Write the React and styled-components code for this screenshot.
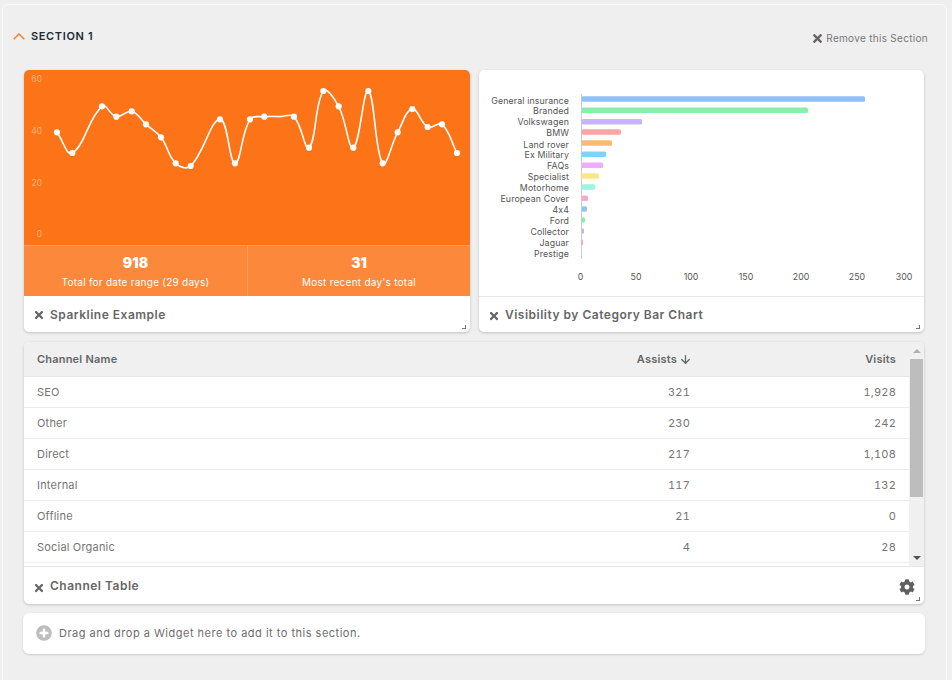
import React from "react";
import styled, { createGlobalStyle } from "styled-components";
import { ArrowDown } from "lucide-react";
import { FaTimes, FaCog, FaPlusCircle } from "react-icons/fa";

const GlobalStyle = createGlobalStyle`
	html, body {
		margin: 0;
		padding: 0;
		height: 100%;
		overflow: hidden;
		background: #efefef;
		font-family: Inter, "Open Sans", "Liberation Sans", sans-serif;
		font-feature-settings: "calt" 0;
		color: #666;
	}
	* {
		box-sizing: border-box;
	}
`;

const Page = styled.div`
	width: 952px;
	height: 680px;
	padding: 4px 5px 0 2px;
`;

const Panel = styled.section`
	height: 690px;
	border: 1px solid #fafafa;
	border-radius: 6px;
	padding: 0 22px 0 21px;
`;

const SectionHead = styled.header`
	height: 65px;
	margin: 0 -4px 0 -11px;
	padding-top: 19px;
	display: flex;
	align-items: flex-start;
	justify-content: space-between;
`;

const SectionTitle = styled.h2`
	margin: 0;
	display: flex;
	align-items: center;
	gap: 6px;
	font-size: 11px;
	font-weight: 600;
	line-height: 24px;
	color: #222b33;
	letter-spacing: 0.65px;
`;

const RemoveLink = styled.a`
	display: flex;
	align-items: center;
	gap: 2px;
	margin-top: 4px;
	font-size: 10px;
	line-height: 20px;
	color: #777;
	letter-spacing: 0.3px;
`;

const Row = styled.div`
	display: grid;
	grid-template-columns: 446px 445px;
	gap: 9px;
	margin-bottom: 10px;
`;

const Card = styled.article`
	position: relative;
	height: 262px;
	display: flex;
	flex-direction: column;
	background: #fff;
	border-radius: 5px;
	box-shadow: 0 1px 3px rgba(0, 0, 0, 0.2);
	overflow: hidden;
`;

const Spark = styled.div`
	height: 175px;
	background: #fc7417;
	svg {
		display: block;
	}
`;

const Stats = styled.div`
	height: 51px;
	display: grid;
	grid-template-columns: 223px 1fr;
	background: #fc883b;
	border-top: 1px solid #fd9d5c;
`;

const Stat = styled.div`
	display: flex;
	flex-direction: column;
	align-items: center;
	padding-top: 7px;
	color: #fff;
	& + & {
		border-left: 1px solid #fd9d5c;
	}
`;

const StatValue = styled.strong`
	font-size: 14px;
	line-height: 20px;
	font-weight: 900;
`;

const StatLabel = styled.span`
	font-size: 10px;
	line-height: 18px;
	letter-spacing: 0.25px;
`;

const ChartArea = styled.div`
	height: 227px;
	border-bottom: 1px solid #e8e8e8;
	svg {
		display: block;
	}
`;

const CardFooter = styled.footer`
	flex: 1;
	display: flex;
	align-items: center;
	gap: 5px;
	padding: 0 9px;
`;

const CloseMark = styled.span`
	display: flex;
	color: #666;
	margin-top: ${(props) => props.$drop || 2}px;
`;

const WidgetTitle = styled.h3`
	margin: 0;
	flex: 1;
	font-size: 12px;
	font-weight: 600;
	color: #666;
	letter-spacing: 0.5px;
`;

const ResizeHandle = styled.i`
	position: absolute;
	right: 4px;
	bottom: 3px;
	width: 4px;
	height: 4px;
	border-right: 1px solid #777;
	border-bottom: 1px solid #777;
`;

const TableCard = styled(Card)`
	margin-bottom: 9px;
`;

const TableScroll = styled.div`
	height: 225px;
	display: flex;
	overflow: hidden;
	border-bottom: 1px solid #e6e6e6;
`;

const Table = styled.table`
	flex: 1;
	align-self: flex-start;
	border-collapse: collapse;
	font-size: 11px;
	letter-spacing: 0.2px;
	font-variant-numeric: tabular-nums;
	color: #747474;
`;

const HeadCell = styled.th`
	height: 34px;
	padding: 1px 13px 0;
	background: #f0f0f0;
	border-bottom: 1px solid #e4e4e4;
	font-weight: 600;
	color: #666;
	text-align: ${(props) => props.$align || "left"};
	width: ${(props) => props.$width || "auto"};
`;

const SortHead = styled.span`
	display: inline-flex;
	align-items: center;
	gap: 2px;
	margin-right: -2px;
`;

const Cell = styled.td`
	height: 31px;
	padding: 1px 13px 0;
	border-bottom: 1px solid #ececec;
	text-align: ${(props) => props.$align || "left"};
`;

const Scrollbar = styled.div`
	width: 15px;
	display: flex;
	flex-direction: column;
	align-items: center;
	background: #f0f0f0;
`;

const ScrollArrow = styled.i`
	width: 0;
	height: 0;
	margin: ${(props) => (props.$up ? "7px 0 6px" : "auto 0 6px")};
	border-left: 4px solid transparent;
	border-right: 4px solid transparent;
	${(props) =>
		props.$up
			? "border-bottom: 4px solid #b0b0b0;"
			: "border-top: 4px solid #505050;"}
`;

const ScrollThumb = styled.div`
	width: 13px;
	height: 138px;
	background: #bdbdbd;
`;

const GearButton = styled.span`
	display: flex;
	color: #606060;
	margin-top: 2px;
`;

const DropZone = styled.div`
	margin: 0 -1px;
	height: 41px;
	display: flex;
	align-items: center;
	gap: 7px;
	padding: 0 13px 2px;
	background: #fff;
	border-radius: 6px;
	box-shadow: 0 1px 2px rgba(0, 0, 0, 0.15);
	font-size: 11px;
	letter-spacing: 0.5px;
	color: #6d6d6d;
`;

// 838 has no dot in the picture, it only keeps that stretch of the line flat
const FLAT_X = 838;

const POINTS = [
	[171, 397], [217, 459], [306, 319], [349, 350], [395, 334], [438, 373], [483, 412],
	[527, 490], [572, 498], [660, 358], [705, 490], [750, 358], [793, 350], [FLAT_X, 350],
	[882, 350], [927, 443], [970, 273], [1016, 319], [1060, 443], [1105, 273], [1148, 490],
	[1193, 397], [1237, 327], [1283, 381], [1326, 373], [1371, 459],
];

const toChart = ([x, y]) => [x / 3 - 24, y / 3 - 70];

// same control point maths as a chart.js line with tension 0.4
function controls(p0, p1, p2, t = 0.4) {
	const d01 = Math.hypot(p1[0] - p0[0], p1[1] - p0[1]);
	const d12 = Math.hypot(p2[0] - p1[0], p2[1] - p1[1]);
	const sum = d01 + d12 || 1;
	const fa = (t * d01) / sum;
	const fb = (t * d12) / sum;
	return {
		prev: [p1[0] - fa * (p2[0] - p0[0]), p1[1] - fa * (p2[1] - p0[1])],
		next: [p1[0] + fb * (p2[0] - p0[0]), p1[1] + fb * (p2[1] - p0[1])],
	};
}

function splinePath(pts) {
	let d = `M${pts[0][0]} ${pts[0][1]}`;
	for (let i = 0; i < pts.length - 1; i++) {
		const a = controls(pts[i - 1] || pts[i], pts[i], pts[i + 1]);
		const b = controls(pts[i], pts[i + 1], pts[i + 2] || pts[i + 1]);
		d += ` C${a.next[0]} ${a.next[1]} ${b.prev[0]} ${b.prev[1]} ${pts[i + 1][0]} ${pts[i + 1][1]}`;
	}
	return d;
}

const SparkChart = () => (
	<svg width="446" height="175">
		{[
			["60", 9],
			["40", 61],
			["20", 113],
			["0", 164],
		].map(([label, y]) => (
			<text key={label} x="18" y={y + 3} textAnchor="end" fontSize="8.5" fill="#fdb27f">
				{label}
			</text>
		))}
		<path d={splinePath(POINTS.map(toChart))} fill="none" stroke="#fff" strokeWidth="1.6" />
		{POINTS.filter(([x]) => x !== FLAT_X)
			.map(toChart)
			.map(([x, y]) => (
				<circle key={x} cx={x} cy={y} r="3.1" fill="#fff" />
			))}
	</svg>
);

const BARS = [
	["General insurance", 865, 101, 99, "#90c1fb"],
	["Branded", 808, 111, 110.3, "#86efac"],
	["Volkswagen", 642, 122, 121.7, "#c4b5fd"],
	["BMW", 621, 133, 132, "#fca5a5"],
	["Land rover", 612, 145, 143, "#fdba74"],
	["Ex Military", 606, 155, 154.3, "#7dd3fc"],
	["FAQs", 603, 166, 165.3, "#f0abfc"],
	["Specialist", 599, 177, 176, "#fde68a"],
	["Motorhome", 595, 188, 187, "#99f6e4"],
	["European Cover", 588, 199, 198.3, "#f9a8d4"],
	["4x4", 587, 210, 209, "#93c5fd"],
	["Ford", 585, 221, 220, "#86efac"],
	["Collector", 584, 232, 231, "#c4b5fd"],
	["Jaguar", 583, 243, 242.3, "#fca5a5"],
	["Prestige", 581.5, 254, 253, "#fdba74"],
];

const TICKS = [
	["0", 580.5],
	["50", 636],
	["100", 691],
	["150", 746],
	["200", 801],
	["250", 857],
	["300", 904],
];

const BarChart = () => (
	<svg width="445" height="227" viewBox="479 70 445 227">
		<rect x="581" y="94" width="1" height="165" fill="#ccc" />
		{BARS.map(([label, end, textY, barY, color]) => (
			<g key={label}>
				<text x="569" y={textY + 3} textAnchor="end" fontSize="8.8" letterSpacing="0.12" fill="#555">
					{label}
				</text>
				<rect x="581.5" y={barY - 2.75} width={end - 581.5} height="5.5" rx="1.5" fill={color} />
			</g>
		))}
		{TICKS.map(([label, x]) => (
			<text key={label} x={x} y="280" textAnchor="middle" fontSize="8.8" fill="#555">
				{label}
			</text>
		))}
	</svg>
);

const ROWS = [
	["SEO", "321", "1,928"],
	["Other", "230", "242"],
	["Direct", "217", "1,108"],
	["Internal", "117", "132"],
	["Offline", "21", "0"],
	["Social Organic", "4", "28"],
];

export default function App() {
	return (
		<Page>
			<GlobalStyle />
			<Panel>
				<SectionHead>
					<SectionTitle>
						<svg width="12" height="7" viewBox="0 0 12 7">
							<path d="M0.7 6.2 6 1 11.3 6.2" fill="none" stroke="#f97c1e" strokeWidth="1.4" />
						</svg>
						SECTION 1
					</SectionTitle>
					<RemoveLink>
						<FaTimes size={13} color="#666" />
						Remove this Section
					</RemoveLink>
				</SectionHead>
				<Row>
					<Card>
						<Spark>
							<SparkChart />
						</Spark>
						<Stats>
							<Stat>
								<StatValue>918</StatValue>
								<StatLabel>Total for date range (29 days)</StatLabel>
							</Stat>
							<Stat>
								<StatValue>31</StatValue>
								<StatLabel>Most recent day's total</StatLabel>
							</Stat>
						</Stats>
						<CardFooter>
							<CloseMark>
								<FaTimes size={12} />
							</CloseMark>
							<WidgetTitle>Sparkline Example</WidgetTitle>
						</CardFooter>
						<ResizeHandle />
					</Card>
					<Card>
						<ChartArea>
							<BarChart />
						</ChartArea>
						<CardFooter>
							<CloseMark>
								<FaTimes size={12} />
							</CloseMark>
							<WidgetTitle>Visibility by Category Bar Chart</WidgetTitle>
						</CardFooter>
						<ResizeHandle />
					</Card>
				</Row>
				<TableCard>
					<TableScroll>
						<Table>
							<thead>
								<tr>
									<HeadCell>Channel Name</HeadCell>
									<HeadCell $align="right" $width="206px">
										<SortHead>
											Assists <ArrowDown size={13} strokeWidth={2.4} />
										</SortHead>
									</HeadCell>
									<HeadCell $align="right" $width="206px">
										Visits
									</HeadCell>
								</tr>
							</thead>
							<tbody>
								{ROWS.map(([name, assists, visits]) => (
									<tr key={name}>
										<Cell>{name}</Cell>
										<Cell $align="right">{assists}</Cell>
										<Cell $align="right">{visits}</Cell>
									</tr>
								))}
							</tbody>
						</Table>
						<Scrollbar>
							<ScrollArrow $up />
							<ScrollThumb />
							<ScrollArrow />
						</Scrollbar>
					</TableScroll>
					<CardFooter>
						<CloseMark $drop={4}>
							<FaTimes size={12} />
						</CloseMark>
						<WidgetTitle>Channel Table</WidgetTitle>
						<GearButton>
							<FaCog size={16} />
						</GearButton>
					</CardFooter>
					<ResizeHandle />
				</TableCard>
				<DropZone>
					<FaPlusCircle size={16} color="#bdbdbd" />
					Drag and drop a Widget here to add it to this section.
				</DropZone>
			</Panel>
		</Page>
	);
}
